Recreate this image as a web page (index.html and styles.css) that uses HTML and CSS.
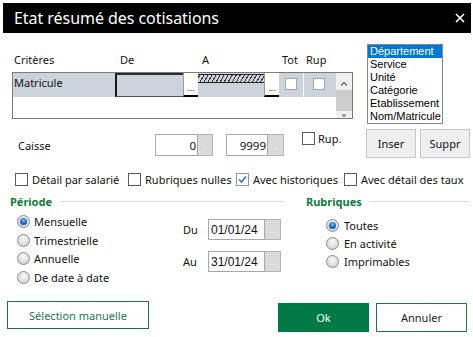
FILE: index.html
```html
<!DOCTYPE html>
<html lang="fr">
<head>
<meta charset="utf-8">
<title>Etat résumé des cotisations</title>
<link rel="stylesheet" href="styles.css">
</head>
<body>
<div class="win">
  <div class="titlebar">
    <span class="title">Etat résumé des cotisations</span>
    <svg class="close" width="10" height="10" viewBox="0 0 10 10"><path d="M1 1L9 9M9 1L1 9" stroke="#fff" stroke-width="1.7" fill="none"/></svg>
  </div>

  <div class="top">
    <div class="grid">
      <div class="ghead">
        <span class="h-crit">Critères</span><span class="h-de">De</span><span class="h-a">A</span><span class="h-tot">Tot</span><span class="h-rup">Rup</span>
      </div>
      <div class="gbody">
        <div class="rows">
          <div class="grow">
            <div class="cell crit">Matricule</div>
            <div class="cell de"></div>
            <div class="gdots">...</div>
            <div class="cell a"><div class="hatch"></div></div>
            <div class="gdots">...</div>
            <div class="cell tot"><span class="gcb"></span></div>
            <div class="cell rup"><span class="gcb"></span></div>
          </div>
        </div>
        <div class="scroll">
          <svg class="sup" width="8" height="5" viewBox="0 0 8 5"><path d="M1 4.5L4 1.5L7 4.5" stroke="#444" stroke-width="1.2" fill="none"/></svg>
          <div class="thumb"></div>
          <svg class="sdown" width="6" height="4" viewBox="0 0 6 4"><path d="M0.5 0.5H5.5L3 3.5Z" fill="#777"/></svg>
        </div>
      </div>
    </div>
    <ul class="listbox">
      <li class="sel">Département</li>
      <li>Service</li>
      <li>Unité</li>
      <li>Catégorie</li>
      <li>Etablissement</li>
      <li>Nom/Matricule</li>
    </ul>
  </div>

  <div class="caisse-row">
    <span class="lbl caisse">Caisse</span>
    <div class="field f1"><span class="inp num">0</span><span class="dots">...</span></div>
    <div class="field f2"><span class="inp num">9999</span><span class="dots">...</span></div>
    <div class="rupgrp"><span class="cb"></span><span class="lbl">Rup.</span></div>
    <button class="btn inser">Inser</button>
    <button class="btn suppr">Suppr</button>
  </div>

  <div class="opts">
    <label class="opt o1"><span class="cb"></span>Détail par salarié</label>
    <label class="opt o2"><span class="cb"></span>Rubriques nulles</label>
    <label class="opt o3"><span class="cb checked"><svg width="11" height="11" viewBox="0 0 11 11"><path d="M2 5.5L4.5 8L9 2.5" stroke="#3a6fc4" stroke-width="1.6" fill="none"/></svg></span>Avec historiques</label>
    <label class="opt o4"><span class="cb"></span>Avec détail des taux</label>
  </div>

  <div class="mid">
    <div class="gleft">
      <div class="ghdr"><span>Période</span><i class="line"></i></div>
      <div class="gbody2">
        <div class="radios">
          <div class="rrow"><span class="radio on"></span>Mensuelle</div>
          <div class="rrow"><span class="radio"></span>Trimestrielle</div>
          <div class="rrow"><span class="radio"></span>Annuelle</div>
          <div class="rrow"><span class="radio"></span>De date à date</div>
        </div>
        <div class="dates">
          <div class="drow"><span class="dl">Du</span><span class="dinp">01/01/24</span><span class="dots">...</span></div>
          <div class="drow au"><span class="dl">Au</span><span class="dinp">31/01/24</span><span class="dots">...</span></div>
        </div>
      </div>
    </div>
    <div class="gright">
      <div class="ghdr"><span>Rubriques</span><i class="line"></i></div>
      <div class="radios r2">
        <div class="rrow"><span class="radio on"></span>Toutes</div>
        <div class="rrow"><span class="radio"></span>En activité</div>
        <div class="rrow"><span class="radio"></span>Imprimables</div>
      </div>
    </div>
  </div>

  <div class="bottom">
    <button class="bbtn selman">Sélection manuelle</button>
    <button class="bbtn ok">Ok</button>
    <button class="bbtn annuler">Annuler</button>
  </div>
</div>
</body>
</html>
```

FILE: styles.css
```css
* { box-sizing: border-box; }
html, body { margin: 0; padding: 0; background: #fff; }
body { width: 473px; height: 337px; overflow: hidden; font-family: "Noto Sans", "Open Sans", sans-serif; font-size: 11px; color: #111; }

.titlebar { height: 30px; margin: 3px 2px 0 3px; background: #000; display: flex; align-items: center; justify-content: space-between; padding: 0 6px 0 11px; }
.title { color: #fff; font-size: 16px; letter-spacing: -0.05px; }
.close { display: block; }

.top { display: flex; align-items: flex-start; padding-top: 11px; }
.grid { margin-left: 12px; margin-top: 8px; width: 341px; }
.ghead { height: 20px; display: flex; align-items: center; padding-left: 2px; font-size: 11px; margin-top: -3px; margin-bottom: 3px; }
.h-crit { width: 106px; }
.h-de { width: 82px; }
.h-a { width: 80px; }
.h-tot { width: 24px; }

.gbody { height: 47px; border: 1px solid #7a7a7a; display: flex; }
.rows { width: 323px; }
.grow { display: flex; height: 24px; background: #cdd3da; }
.cell { height: 24px; }
.crit { width: 102px; padding: 2px 0 0 1px; font-size: 11px; }
.de { width: 68px; border-top: 2px solid #2a2a2a; border-left: 2px solid #1a1a1a; border-bottom: 1px solid #555; }
.gdots { width: 15px; background: #fff; border-left: 1px solid #9a9a9a; border-bottom: 2px solid #000; font-size: 9px; line-height: 1; display: flex; align-items: flex-end; justify-content: center; padding-bottom: 3px; color: #222; }
.a { width: 66px; padding-top: 1px; }
.hatch { height: 9px; border-top: 1px solid #222; border-bottom: 1px solid #222; background: repeating-linear-gradient(-60deg, #cdd3da 0, #cdd3da 2.5px, #333 2.5px, #333 3.5px); }
.tot { padding: 5px 0 0 6px; border-right: 1px solid #fff; width: 25px; }
.rup { width: 32px; padding: 5px 0 0 9px; }
.gcb { display: block; width: 12px; height: 12px; background: #fff; border: 1px solid #9aa; }

.scroll { width: 16px; background: #f0f0f0; display: flex; flex-direction: column; align-items: center; }
.sup { margin-top: 8px; }
.thumb { width: 16px; height: 22px; background: #cdcdcd; margin-top: 4px; }
.sdown { margin-top: 3px; }

.listbox { list-style: none; margin: 0 0 0 14px; padding: 0; width: 76px; border: 1px solid #828790; font-family: "Liberation Sans", Arial, sans-serif; font-size: 11px; }
.listbox li { height: 13px; line-height: 13px; padding-left: 2px; color: #000; white-space: nowrap; }
.listbox li.sel { background: #0078d7; color: #fff; }

.caisse-row { display: flex; align-items: flex-start; margin-top: 5px; height: 29px; }
.lbl { color: #111; }
.caisse { margin-left: 18px; width: 137px; margin-top: 9px; }
.field { display: flex; margin-top: 5px; height: 22px; }
.f2 { margin-left: 13px; }
.inp { height: 22px; border: 1px solid #a8a8a8; background: #fff; display: flex; align-items: center; font-size: 11.5px; }
.num { justify-content: flex-end; padding-right: 1px; }
.f1 .inp { width: 43px; }
.f2 .inp { width: 42px; }
.dots { width: 15px; height: 22px; background: #dadada; border: 1px solid #b5b5b5; border-left: none; color: #f8f8f8; font-size: 8px; line-height: 1; display: flex; align-items: flex-end; justify-content: center; padding-bottom: 5px; }
.f2 .dots { width: 16px; }
.rupgrp { margin-left: 18px; width: 64px; display: flex; align-items: flex-start; margin-top: 3px; }
.rupgrp .lbl { margin-left: 3px; margin-top: -1px; }
.cb { display: inline-flex; align-items: center; justify-content: center; width: 13px; height: 13px; border: 1px solid #5a5a5a; background: #fff; flex: none; }
.cb.checked { border-color: #7a9cc8; }
.cb svg { display: block; }

.btn { width: 50px; height: 29px; background: #efefef; border: 1px solid #c8c8c8; font-family: inherit; font-size: 11px; color: #111; padding: 0; }
.suppr { margin-left: 4px; }

.opts { display: flex; margin-top: 15px; height: 13px; align-items: center; }
.opt { display: flex; align-items: center; white-space: nowrap; }
.opt .cb { margin-right: 4px; }
.o1 { margin-left: 15px; width: 113px; }
.o2 { width: 108px; }
.o3 { width: 108px; }

.mid { display: flex; margin-top: 9px; }
.ghdr { display: flex; align-items: center; height: 12px; color: #0e7a3c; font-weight: bold; font-size: 11px; }
.ghdr .line { flex: 1; height: 1px; background: #d3dde2; margin-left: 7px; }
.gleft { margin-left: 10px; width: 275px; }
.gright { margin-left: 21px; width: 164px; }
.gbody2 { display: flex; }
.radios { width: 173px; margin-top: 5.5px; }
.rrow { height: 18.5px; display: flex; align-items: center; white-space: nowrap; }
.radio { width: 13px; height: 13px; border-radius: 50%; border: 1px solid #8c8c8c; background: radial-gradient(circle at 50% 35%, #fafafa 0, #e0e0e0 55%, #c4c4c4 100%); margin: 0 4px 0 7px; display: flex; align-items: center; justify-content: center; flex: none; }
.radio.on::after { content: ""; width: 7px; height: 7px; border-radius: 50%; background: radial-gradient(circle at 50% 35%, #7cc4ff 0, #1c6bc4 50%, #0b3f80 100%); }
.r2 { margin-top: 9px; }
.r2 .rrow { height: 18px; }
.r2 .radio { margin-left: 20px; margin-right: 5px; }

.dates { margin-top: 12px; }
.drow { display: flex; align-items: center; height: 21px; }
.drow.au { margin-top: 11px; }
.dl { width: 25px; }
.dinp { width: 57px; height: 21px; border: 1px solid #a8a8a8; display: flex; align-items: center; padding-left: 2px; font-family: "Liberation Sans", Arial, sans-serif; font-size: 12px; }
.drow .dots { width: 16px; height: 21px; }

.bottom { display: flex; align-items: flex-start; margin-top: 14.5px; }
.bbtn { font-family: inherit; font-size: 11px; padding: 0; }
.selman { margin-left: 7px; width: 142px; height: 28px; background: #fff; border: 1px solid #1b6e45; color: #177a55; }
.ok { margin-left: 129px; margin-top: 2px; width: 91px; height: 29px; background: #007a45; border: none; color: #fff; }
.annuler { margin-left: 7px; margin-top: 2px; width: 91px; height: 29px; background: #fff; border: 1px solid #1b7a4a; color: #222; }
```
